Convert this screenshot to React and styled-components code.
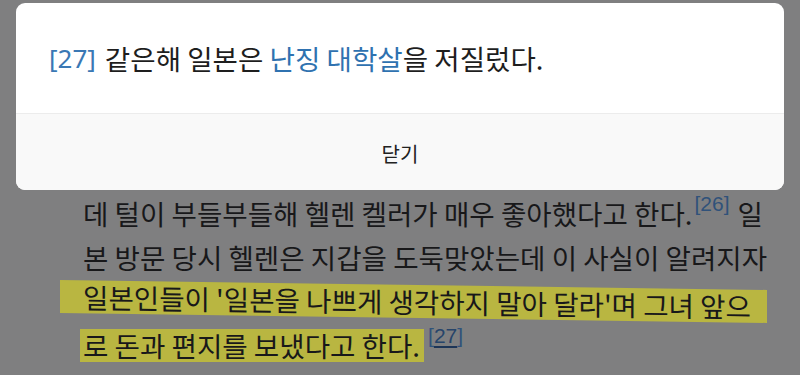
import React from 'react';
import styled, { createGlobalStyle } from 'styled-components';

const GlobalStyle = createGlobalStyle`
  html, body {
    margin: 0;
    padding: 0;
    background: #7f7f80;
  }
  body {
    font-family: "Noto Sans CJK KR", "Noto Sans", sans-serif;
  }
`;

// 본문 (딤 처리된 배경)
const Page = styled.div`
  width: 800px;
  height: 375px;
  overflow: hidden;
  background: #7f7f80;
  position: relative;
`;

const Article = styled.div`
  padding: 191px 0 0 83px;
  font-size: 27.6px;
  line-height: 44px;
  color: #18181a;
`;

const Line = styled.div`
  white-space: nowrap;
  height: 44px;
  display: flex;
  align-items: center;
`;

const Mark = styled.span`
  background: #b9b641;
  padding: 0 ${(p) => p.$right || 0}px 0 ${(p) => p.$left || 0}px;
  margin-left: ${(p) => -(p.$left || 0)}px;
  line-height: 33px;
  transform: ${(p) => (p.$tilt ? 'skewY(0.8deg)' : 'none')};
  display: inline-block;
`;

const Ref = styled.sup`
  font-family: "Liberation Sans", "Noto Sans", sans-serif;
  font-size: 21px;
  color: #30527a;
  vertical-align: top;
  position: relative;
  top: -10px;
  margin: 0 ${(p) => p.$gap || 0}px 0 ${(p) => p.$lead || 4}px;
  line-height: 1;
`;

const RefNum = styled.span`
  text-decoration: ${(p) => (p.$underline ? 'underline' : 'none')};
  text-decoration-color: #1d3557;
  text-underline-offset: 3px;
  text-decoration-thickness: 2px;
  color: ${(p) => (p.$underline ? '#26446a' : 'inherit')};
`;

// 각주 팝업
const Modal = styled.div`
  position: absolute;
  top: 3px;
  left: 16px;
  right: 16px;
  height: 187px;
  border-radius: 9px;
  overflow: hidden;
  background: #fff;
  display: flex;
  flex-direction: column;
`;

const ModalBody = styled.div`
  height: 110px;
  display: flex;
  align-items: center;
  padding: 0 0 0 33px;
  font-size: 27.6px;
  color: #1e1e1e;
  border-bottom: 1px solid #ececec;
`;

const Num = styled.span`
  font-family: "Noto Sans", sans-serif;
  font-size: 26px;
  color: #3a78b4;
  margin-right: 9px;
`;

const Link = styled.span`
  color: #2f72b0;
`;

const ModalFooter = styled.div`
  flex: 1;
  background: #f9f9f9;
  display: flex;
  align-items: center;
  justify-content: center;
  padding-top: 2px;
  font-size: 20px;
  color: #222;
`;

export default function App() {
  return (
    <>
      <GlobalStyle />
      <Page>
        <Article>
          <Line>
            데 털이 부들부들해 헬렌 켈러가 매우 좋아했다고 한다.
            <Ref $lead={2} $gap={8}>[26]</Ref>일
          </Line>
          <Line>본 방문 당시 헬렌은 지갑을 도둑맞았는데 이 사실이 알려지자</Line>
          <Line>
            <Mark $left={23} $right={16} $tilt>
              일본인들이 '일본을 나쁘게 생각하지 말아 달라'며 그녀 앞으
            </Mark>
          </Line>
          <Line>
            <Mark $left={3} $right={4}>
              로 돈과 편지를 보냈다고 한다.
            </Mark>
            <Ref>
              [<RefNum $underline>27</RefNum>]
            </Ref>
          </Line>
        </Article>

        <Modal>
          <ModalBody>
            <Num>[27]</Num>
            같은해 일본은&nbsp;<Link>난징 대학살</Link>을 저질렀다.
          </ModalBody>
          <ModalFooter>닫기</ModalFooter>
        </Modal>
      </Page>
    </>
  );
}
